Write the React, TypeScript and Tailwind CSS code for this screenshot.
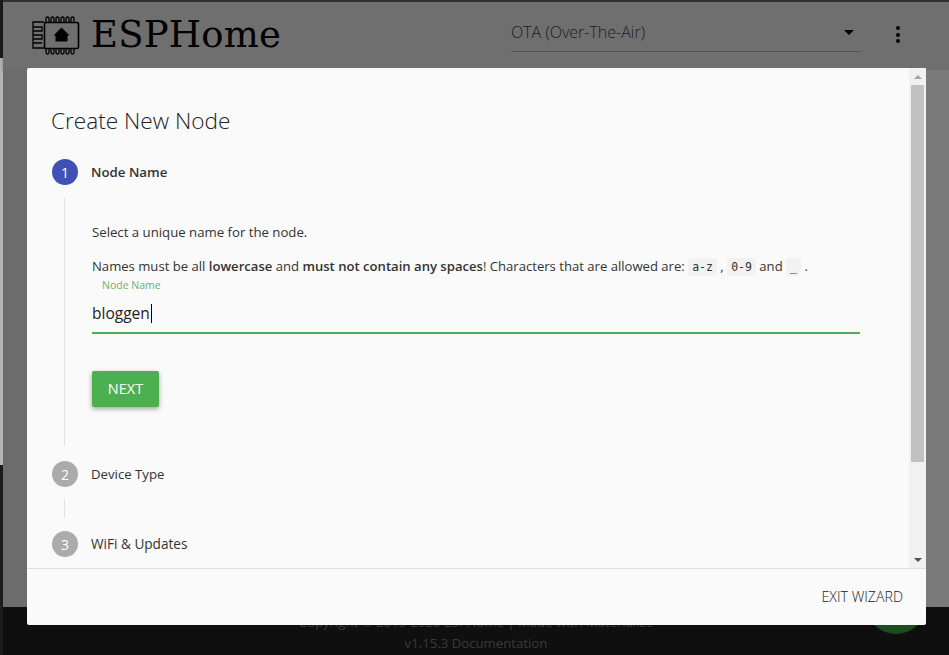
const sans = { fontFamily: '"Open Sans", sans-serif' }

function Logo() {
  return (
    <svg width="50" height="40" viewBox="0 0 50 40" fill="none" stroke="#000" strokeWidth="1.3">
      {/* antenna */}
      <path d="M13 7H2V33H13M2 12H11V16H2V20H11V24H2V28H11" />
      {/* chip body */}
      <rect x="13.5" y="7.5" width="34" height="26" rx="1.5" strokeWidth="1.6" />
      {/* pins */}
      <path d="M15 7V3.5a1.5 1.5 0 0 1 3 0V7M20 7V3.5a1.5 1.5 0 0 1 3 0V7M25 7V3.5a1.5 1.5 0 0 1 3 0V7M30 7V3.5a1.5 1.5 0 0 1 3 0V7M35 7V3.5a1.5 1.5 0 0 1 3 0V7M40 7V3.5a1.5 1.5 0 0 1 3 0V7" />
      <path d="M15 34V37.5a1.5 1.5 0 0 0 3 0V34M20 34V37.5a1.5 1.5 0 0 0 3 0V34M25 34V37.5a1.5 1.5 0 0 0 3 0V34M30 34V37.5a1.5 1.5 0 0 0 3 0V34M35 34V37.5a1.5 1.5 0 0 0 3 0V34M40 34V37.5a1.5 1.5 0 0 0 3 0V34" />
      {/* house */}
      <path d="M30.5 12.5L38.5 20.5H36.5V26.5H24.5V20.5H22.5Z" fill="#000" stroke="none" />
    </svg>
  )
}

function Code({ children }: { children: string }) {
  return (
    <code className="rounded-[3px] bg-[#f2f2f2] px-[4px] py-[2px] text-[11.5px] text-[#333]" style={{ fontFamily: '"DejaVu Sans Mono", monospace' }}>
      {children}
    </code>
  )
}

function StepCircle({ n, active }: { n: number; active?: boolean }) {
  return (
    <div className={`flex h-[26px] w-[26px] shrink-0 items-center justify-center rounded-full text-[14px] text-white ${active ? 'bg-[#3f51b5]' : 'bg-[#ababab]'}`}>
      {n}
    </div>
  )
}

export default function App() {
  return (
    <div className="relative flex h-[655px] w-[949px] overflow-hidden bg-[#0f0f0f]" style={sans}>
      {/* left edge of the window behind */}
      <div className="flex w-[3px] shrink-0 flex-col">
        <div className="h-[58px] bg-[#1c1c1c]" />
        <div className="h-[407px] bg-[#b4b4b4]" />
        <div className="flex-1 bg-[#1c1c1c]" />
      </div>

      {/* page under the overlay */}
      <div className="flex min-w-0 flex-1 flex-col">
        <div className="h-[2px] bg-[#333333]" />
        <header className="flex h-[68px] items-start bg-[#6f6f6f] shadow-[0_1px_3px_rgba(0,0,0,0.3)]">
          <div className="mt-[13px] ml-[28px]"><Logo /></div>
          <div className="mt-[9px] ml-[10px] w-[190px] text-[37px] leading-[48px] tracking-[0.2px] whitespace-nowrap text-black" style={{ fontFamily: '"DejaVu Serif", serif' }}>
            ESPHome
          </div>
          <div className="mt-[11px] ml-[230px] flex h-[39px] w-[350px] items-center justify-between border-b border-[#555] text-[16px] font-light text-[#1c1c1c]">
            <span>OTA (Over-The-Air)</span>
            <span className="mr-[7px] h-0 w-0 border-x-[5px] border-t-[5px] border-x-transparent border-t-black" />
          </div>
          <div className="mt-[24px] ml-[35px] flex flex-col gap-[2.5px]">
            <span className="h-[4px] w-[4px] rounded-full bg-black" />
            <span className="h-[4px] w-[4px] rounded-full bg-black" />
            <span className="h-[4px] w-[4px] rounded-full bg-black" />
          </div>
        </header>
        <main className="flex-1 bg-gradient-to-r from-[#6c6c6c] via-[#707070] to-[#7a7a7a]" />
        <footer className="flex h-[48px] shrink-0 flex-col items-center bg-[#0f0f0f] pt-[5px] text-[13.2px] leading-[21px] text-[#3a3a3a]">
          <div>Copyright © 2019-2020 ESPHome | Made with Materialize</div>
          <div>v1.15.3 Documentation</div>
        </footer>
      </div>

      {/* floating button behind the dialog */}
      <div className="absolute top-[574px] left-[866px] h-[60px] w-[60px] rounded-full bg-[#1f4a20]" />

      {/* dialog */}
      <div className="absolute top-[68px] left-[27px] flex h-[557px] w-[899px] flex-col rounded-[2px] bg-[#fafafa] text-[#333]">
        <div className="flex min-h-0 flex-1">
          <div className="min-w-0 flex-1 pt-[38px] pl-[24px]">
            <h4 className="text-[22.6px] leading-[29px] font-light text-[#222]">Create New Node</h4>

            <div className="mt-[24px] flex items-center gap-[13px]">
              <div className="ml-px"><StepCircle n={1} active /></div>
              <span className="relative top-px text-[13.3px] font-semibold text-[#333]">Node Name</span>
            </div>

            {/* step 1 content */}
            <div className="mt-[13px] ml-[13px] h-[248px] border-l border-[#e2e2e2] pt-[24px] pl-[27px]">
              <p className="text-[13.2px] leading-[20px]">Select a unique name for the node.</p>
              <p className="mt-[14px] text-[13.1px] leading-[20px] whitespace-nowrap">
                Names must be all <b className="font-semibold">lowercase</b> and <b className="font-semibold">must not contain any spaces</b>! Characters that are allowed are: <Code>a-z</Code> , <Code>0-9</Code> and <Code>_</Code> .
              </p>
              <div className="mt-[1px] w-[768px]">
                <div className="ml-[10px] text-[10.5px] leading-[14px] text-[#6cb16f]">Node Name</div>
                <div className="flex h-[42px] items-center border-b-2 border-[#4caf50] pt-[3px] text-[15.5px] text-[#222]">
                  bloggen<span className="ml-px h-[19px] w-px bg-black" />
                </div>
              </div>
              <button className="mt-[37px] flex h-[36px] w-[67px] items-center justify-center rounded-[2px] bg-[#4caf50] text-[14.5px] text-white shadow-[0_2px_5px_rgba(0,0,0,0.35)]">
                NEXT
              </button>
            </div>

            <div className="mt-[15px] flex items-center gap-[13px]">
              <div className="ml-px"><StepCircle n={2} /></div>
              <span className="relative top-px text-[13.2px]">Device Type</span>
            </div>
            <div className="mt-[12px] ml-[13px] h-[19px] border-l border-[#e2e2e2]" />
            <div className="mt-[13px] flex items-center gap-[13px]">
              <div className="ml-px"><StepCircle n={3} /></div>
              <span className="text-[13.6px]">WiFi &amp; Updates</span>
            </div>
          </div>

          {/* scrollbar */}
          <div className="flex w-[17px] shrink-0 flex-col items-center bg-[#f1f1f1]">
            <div className="flex h-[17px] w-full items-center justify-center">
              <span className="h-0 w-0 border-x-[4px] border-b-[4px] border-x-transparent border-b-[#a3a3a3]" />
            </div>
            <div className="h-[377px] w-[13px] bg-[#c1c1c1]" />
            <div className="flex-1" />
            <div className="flex h-[17px] w-full items-center justify-center">
              <span className="h-0 w-0 border-x-[4px] border-t-[4px] border-x-transparent border-t-[#505050]" />
            </div>
          </div>
        </div>

        <div className="flex h-[57px] shrink-0 items-center justify-end border-t border-[#e0e0e0] pr-[23px]">
          <span className="text-[14.2px] font-light text-[#222]">EXIT WIZARD</span>
        </div>
      </div>
    </div>
  )
}
